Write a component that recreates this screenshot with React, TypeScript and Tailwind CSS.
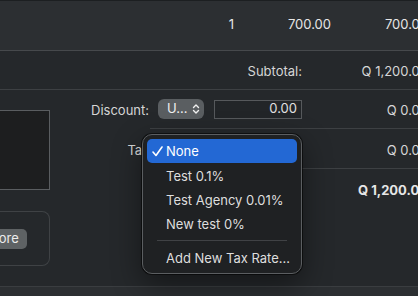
import React from "react";

const font = { fontFamily: "Inter, 'Noto Sans', sans-serif" };

function UpDown() {
  return (
    <svg width="8" height="12" viewBox="0 0 8 12" fill="none" stroke="currentColor" strokeWidth="1.4" strokeLinecap="round" strokeLinejoin="round">
      <path d="M1.5 4.5 L4 2 L6.5 4.5" />
      <path d="M1.5 7.5 L4 10 L6.5 7.5" />
    </svg>
  );
}

function Check() {
  return (
    <svg width="11" height="11" viewBox="0 0 11 11" fill="none" stroke="currentColor" strokeWidth="1.6" strokeLinecap="round" strokeLinejoin="round">
      <path d="M1 6 L4 9.5 L10 1" />
    </svg>
  );
}

function TaxMenu() {
  const items = ["Test 0.1%", "Test Agency 0.01%", "New test 0%"];
  return (
    <div className="absolute left-[142px] top-[134px] w-[160px] rounded-[10px] border border-[#5b5e61] bg-[#1f2123] px-[4px] pt-[4px] pb-[3px] shadow-[0_0_0_1px_rgba(0,0,0,0.55),0_10px_30px_rgba(0,0,0,0.45)]">
      <div className="flex h-[24px] items-center rounded-[5px] bg-[#2368d4] pl-[5px] pt-[1px] text-white">
        <span className="w-[14px]">
          <Check />
        </span>
        <span>None</span>
      </div>
      {items.map((t) => (
        <div key={t} className="flex h-[24px] items-center pl-[19px] pt-[3px] text-[#dedede]">
          {t}
        </div>
      ))}
      <div className="flex h-[11px] items-center px-[10px]">
        <div className="h-px w-full bg-[#404245]" />
      </div>
      <div className="flex h-[24px] items-center pl-[19px] pt-[1px] text-[#dedede]">Add New Tax Rate…</div>
    </div>
  );
}

export default function App() {
  return (
    <div className="relative h-[296px] w-[418px] overflow-hidden bg-[#25282b] text-[13px]" style={font}>
      <div className="w-[430px]">
        {/* Line item row */}
        <div className="flex h-[51px] items-center justify-end border-t border-b border-t-[#1c1f21] border-b-[#46494c] bg-[#2c2f32] pr-[2px] pb-[1px] text-[#e6e6e6]">
          <div className="w-[97px] text-right">1</div>
          <div className="w-[97px] text-right">700.00</div>
          <div className="w-[97px] text-right">700.00</div>
        </div>

        {/* Subtotal */}
        <div className="flex h-[39px] items-center justify-end border-b border-[#3d4043] pr-[2px] pt-[3px] text-[#d6d6d6]">
          <div className="text-right">Subtotal:</div>
          <div className="w-[126px] text-right">Q 1,200.00</div>
        </div>

        {/* Body */}
        <div className="flex h-[196px]">
          <div className="w-[50px] shrink-0">
            <div className="mt-[20px] h-[80px] border border-l-0 border-[#5a5d60] bg-[#1d1e1f]" />
            <div className="mt-[21px] flex h-[55px] items-center rounded-r-[8px] border border-l-0 border-[#3f4245]">
              <div className="-ml-[36px] flex h-[20px] items-center rounded-[5px] bg-[#5e6264] px-[8px] text-[#ececec]">
                Restore
              </div>
            </div>
          </div>

          <div className="flex-1">
            <div className="flex h-[39px]">
              <div className="flex w-[100px] items-center justify-end pr-[1px] pt-[3px] text-[#d6d6d6]">Discount:</div>
              <div className="flex flex-1 items-center border-b border-[#3d4043] pr-[2px]">
                <div className="ml-[8px] flex h-[20px] w-[46px] items-center gap-[5px] rounded-[6px] bg-[#5a5e61] pl-[9px] text-[#f0f0f0]">
                  <span>U…</span>
                  <UpDown />
                </div>
                <div className="ml-[10px] flex h-[19px] w-[88px] items-center justify-end border border-[#56595c] bg-[#222528] pr-[4px] text-[#e0e0e0]">
                  0.00
                </div>
                <div className="flex-1 pt-[3px] text-right text-[#d6d6d6]">Q 0.00</div>
              </div>
            </div>

            <div className="flex h-[40px]">
              <div className="flex w-[103px] items-center justify-end pt-[4px] text-[#d6d6d6]">Tax:</div>
              <div className="flex flex-1 items-center justify-end border-b border-[#3d4043] pr-[2px] pt-[4px] text-[#d6d6d6]">
                Q 0.00
              </div>
            </div>

            <div className="flex h-[40px] items-center justify-end pr-[2px] pt-[3px] font-bold text-[#e6e6e6]">
              Q 1,200.00
            </div>
          </div>
        </div>

        {/* Bottom bar */}
        <div className="h-[10px] border-t border-[#3a3d40] bg-[#2c2f32]" />
      </div>

      <TaxMenu />
    </div>
  );
}
